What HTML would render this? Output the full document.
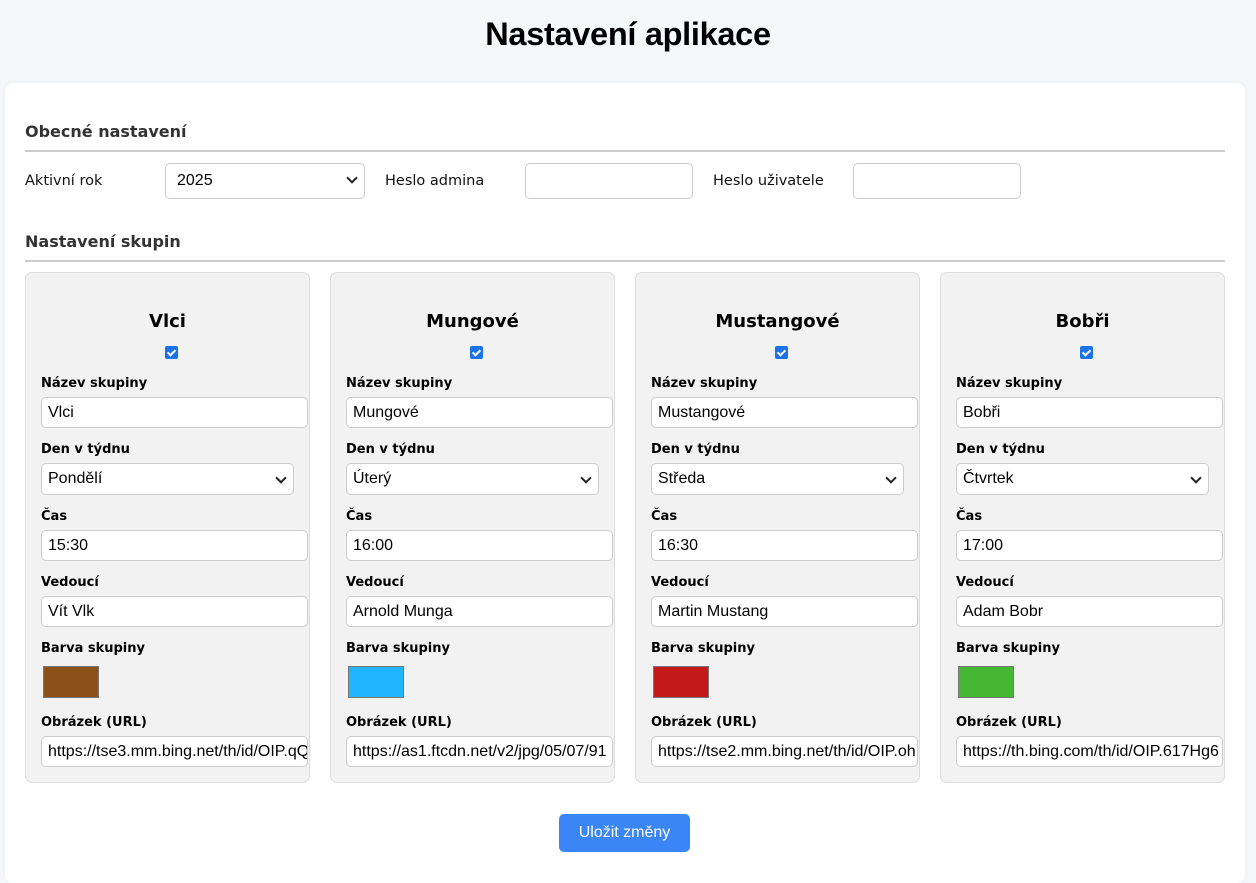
<!DOCTYPE html>
<html><head><meta charset="utf-8">
<style>
*{box-sizing:border-box;margin:0;padding:0}
body{width:1256px;height:862px;background:#f6f7f9;position:relative;overflow:hidden;font-family:"DejaVu Sans","Liberation Sans",sans-serif;color:#111}
h1{position:absolute;left:0;width:1256px;top:14px;text-align:center;font-size:32.5px;font-weight:bold;letter-spacing:-0.3px;font-family:"Liberation Sans",sans-serif;line-height:40px;color:#000}
.wrap{position:absolute;left:5px;top:83px;width:1240px;height:800px;background:#fff;border-radius:8px;box-shadow:0 0 4px rgba(0,0,0,.06)}
.sec{position:absolute;left:25px;width:1200px;font-size:16px;font-weight:bold;color:#333;border-bottom:2px solid #ccc;height:31px;line-height:22px}
.lbl{position:absolute;font-size:14.5px;line-height:18px;color:#111}
.inp{position:absolute;background:#fff;border:1px solid #ccc;border-radius:5px;font-family:"Liberation Sans",Arial,sans-serif;font-size:16px;color:#000;padding-left:11px;white-space:nowrap;overflow:hidden;line-height:29px}
.sel::after{content:"";position:absolute;right:8px;top:10px;width:6px;height:6px;border-right:2px solid #222;border-bottom:2px solid #222;transform:rotate(45deg)}
.card{position:absolute;top:272px;width:285px;height:511px;background:#f2f2f2;border:1px solid #ddd;border-radius:7px}
.card .t{position:absolute;left:0;width:100%;top:38px;text-align:center;font-size:18px;font-weight:bold;line-height:22px;color:#000}
.card .cb{position:absolute;left:139px;top:73px;width:13px;height:13px;background:#1a73e8;border-radius:2px}
.card .cb::after{content:"";position:absolute;left:4px;top:1.5px;width:3px;height:6px;border-right:2px solid #fff;border-bottom:2px solid #fff;transform:rotate(45deg)}
.card .l{position:absolute;left:15px;font-size:13px;font-weight:bold;line-height:18px;color:#000}
.card .inp{left:15px;width:267px;height:31px;padding-left:6px;line-height:30px}
.card .sel{width:253px;height:32px}
.sw{position:absolute;left:17px;top:393px;width:56px;height:32px;border:1px solid #777}
.btn{position:absolute;left:559px;top:814px;width:131px;height:38px;background:#3b86f7;border-radius:5px;color:#fff;font-family:"Liberation Sans",Arial,sans-serif;font-size:16px;text-align:center;line-height:38px}
</style></head><body>
<h1>Nastavení aplikace</h1>
<div class="wrap"></div>
<div class="sec" style="top:121px">Obecné nastavení</div>
<div class="lbl" style="left:25px;top:172px">Aktivní rok</div>
<div class="inp sel" style="left:165px;top:163px;width:200px;height:36px;line-height:34px">2025</div>
<div class="lbl" style="left:385px;top:172px">Heslo admina</div>
<div class="inp" style="left:525px;top:163px;width:168px;height:36px"></div>
<div class="lbl" style="left:713px;top:172px">Heslo uživatele</div>
<div class="inp" style="left:853px;top:163px;width:168px;height:36px"></div>
<div class="sec" style="top:231px">Nastavení skupin</div>

<div class="card" style="left:25px">
<div class="t">Vlci</div><div class="cb"></div>
<div class="l" style="top:102px">Název skupiny</div><div class="inp" style="top:124px">Vlci</div>
<div class="l" style="top:168px">Den v týdnu</div><div class="inp sel" style="top:190px">Pondělí</div>
<div class="l" style="top:235px">Čas</div><div class="inp" style="top:257px">15:30</div>
<div class="l" style="top:301px">Vedoucí</div><div class="inp" style="top:323px">Vít Vlk</div>
<div class="l" style="top:367px">Barva skupiny</div><div class="sw" style="background:#8b5119"></div>
<div class="l" style="top:441px">Obrázek (URL)</div><div class="inp" style="top:463px">https://tse3.mm.bing.net/th/id/OIP.qQ</div>
</div>
<div class="card" style="left:330px">
<div class="t">Mungové</div><div class="cb"></div>
<div class="l" style="top:102px">Název skupiny</div><div class="inp" style="top:124px">Mungové</div>
<div class="l" style="top:168px">Den v týdnu</div><div class="inp sel" style="top:190px">Úterý</div>
<div class="l" style="top:235px">Čas</div><div class="inp" style="top:257px">16:00</div>
<div class="l" style="top:301px">Vedoucí</div><div class="inp" style="top:323px">Arnold Munga</div>
<div class="l" style="top:367px">Barva skupiny</div><div class="sw" style="background:#22b5ff"></div>
<div class="l" style="top:441px">Obrázek (URL)</div><div class="inp" style="top:463px">https://as1.ftcdn.net/v2/jpg/05/07/91</div>
</div>
<div class="card" style="left:635px">
<div class="t">Mustangové</div><div class="cb"></div>
<div class="l" style="top:102px">Název skupiny</div><div class="inp" style="top:124px">Mustangové</div>
<div class="l" style="top:168px">Den v týdnu</div><div class="inp sel" style="top:190px">Středa</div>
<div class="l" style="top:235px">Čas</div><div class="inp" style="top:257px">16:30</div>
<div class="l" style="top:301px">Vedoucí</div><div class="inp" style="top:323px">Martin Mustang</div>
<div class="l" style="top:367px">Barva skupiny</div><div class="sw" style="background:#c4191b"></div>
<div class="l" style="top:441px">Obrázek (URL)</div><div class="inp" style="top:463px">https://tse2.mm.bing.net/th/id/OIP.oh</div>
</div>
<div class="card" style="left:940px">
<div class="t">Bobři</div><div class="cb"></div>
<div class="l" style="top:102px">Název skupiny</div><div class="inp" style="top:124px">Bobři</div>
<div class="l" style="top:168px">Den v týdnu</div><div class="inp sel" style="top:190px">Čtvrtek</div>
<div class="l" style="top:235px">Čas</div><div class="inp" style="top:257px">17:00</div>
<div class="l" style="top:301px">Vedoucí</div><div class="inp" style="top:323px">Adam Bobr</div>
<div class="l" style="top:367px">Barva skupiny</div><div class="sw" style="background:#46b733"></div>
<div class="l" style="top:441px">Obrázek (URL)</div><div class="inp" style="top:463px">https://th.bing.com/th/id/OIP.617Hg6</div>
</div>
<div class="btn">Uložit změny</div>
</body></html>
